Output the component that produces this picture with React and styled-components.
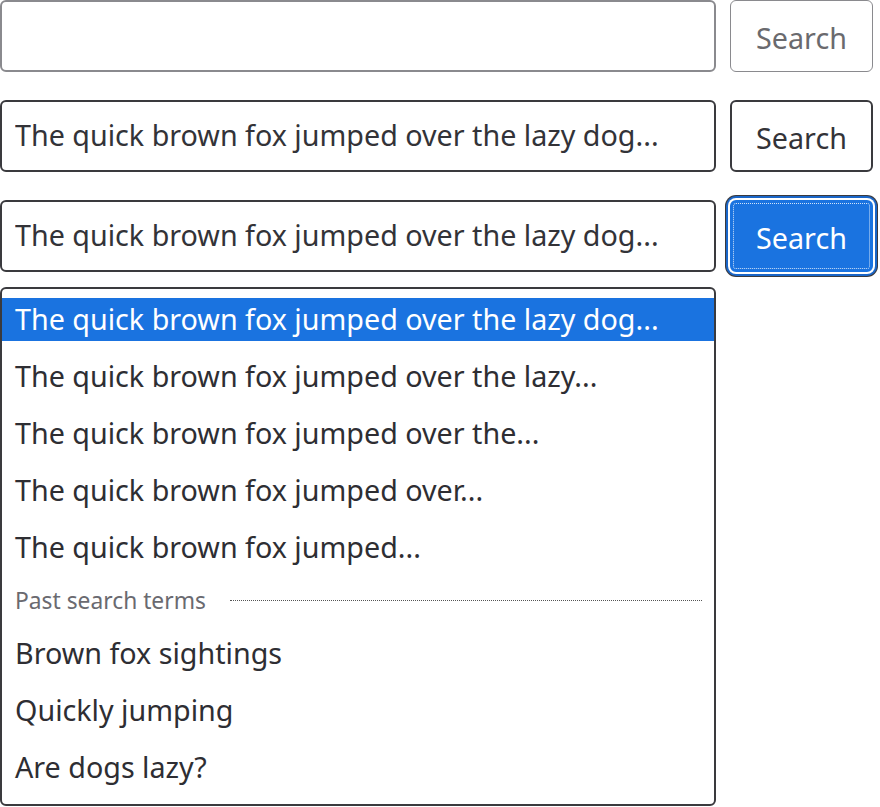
import React from "react";
import styled, { createGlobalStyle } from "styled-components";

const Global = createGlobalStyle`
  html, body { margin: 0; padding: 0; background: #fff; }
  body { font-family: "Noto Sans", "Open Sans", sans-serif; }
  * { box-sizing: border-box; }
`;

const Page = styled.div`
  display: flex;
  flex-direction: column;
  gap: 28px;
  width: 880px;
`;

const Row = styled.div`
  display: flex;
  gap: 14px;
  align-items: stretch;
`;

const Field = styled.input`
  width: 716px;
  height: 72px;
  padding: 0 13px 4px;
  border: 2px solid ${(p) => (p.disabled ? "#8a8a8e" : "#3a3a3e")};
  border-radius: 6px;
  background: #fff;
  font-family: "Noto Sans", sans-serif;
  font-size: 28.7px;
  color: #333338;
  outline: none;
`;

const Button = styled.button`
  width: 143px;
  height: 72px;
  border-radius: 6px;
  font-family: "Noto Sans", sans-serif;
  font-size: 28.7px;
  padding: 3px 0 0;
  cursor: pointer;
  border: ${(p) =>
    p.$primary ? "2px solid #1a73e0" : p.disabled ? "1.5px solid #8a8a8e" : "2px solid #3a3a3e"};
  background: ${(p) => (p.$primary ? "#1a73e0" : "#fff")};
  color: ${(p) => (p.$primary ? "#fff" : p.disabled ? "#6a6a6e" : "#333338")};
  box-shadow: ${(p) =>
    p.$primary ? "0 0 0 2px #fff, 0 0 0 4px #1a66c8, 0 0 0 5px #3a3a3e" : "none"};
  outline: ${(p) => (p.$primary ? "1px dotted rgba(255,255,255,0.8)" : "none")};
  outline-offset: -4px;
`;

const Listbox = styled.div`
  width: 716px;
  margin-top: -13px;
  border: 2px solid #3a3a3e;
  border-radius: 6px;
  padding: 9px 0 15px;
  display: flex;
  flex-direction: column;
`;

const Option = styled.div`
  height: 43px;
  margin-bottom: 14px;
  display: flex;
  align-items: center;
  padding: 0 13px 2px;
  font-size: 28.7px;
  color: ${(p) => (p.$active ? "#fff" : "#2e2e33")};
  background: ${(p) => (p.$active ? "#1a73e0" : "transparent")};
  white-space: nowrap;
  &:last-child { margin-bottom: 0; }
`;

const Group = styled.div`
  display: flex;
  align-items: center;
  gap: 24px;
  padding: 0 12px 0 13px;
  height: 24px;
  margin: 5px 0 20px;
  font-size: 22.8px;
  color: #6a6a70;
  white-space: nowrap;
`;

const Rule = styled.div`
  flex: 1;
  border-top: 1px dotted #555;
`;

const suggestions = [
  "The quick brown fox jumped over the lazy dog...",
  "The quick brown fox jumped over the lazy...",
  "The quick brown fox jumped over the...",
  "The quick brown fox jumped over...",
  "The quick brown fox jumped...",
];

const past = ["Brown fox sightings", "Quickly jumping", "Are dogs lazy?"];

export default function App() {
  return (
    <>
      <Global />
      <Page>
        <Row>
          <Field disabled value="" readOnly />
          <Button disabled>Search</Button>
        </Row>
        <Row>
          <Field value="The quick brown fox jumped over the lazy dog..." readOnly />
          <Button>Search</Button>
        </Row>
        <Row>
          <Field value="The quick brown fox jumped over the lazy dog..." readOnly />
          <Button $primary>Search</Button>
        </Row>
        <Listbox>
          {suggestions.map((s, i) => (
            <Option key={s} $active={i === 0}>
              {s}
            </Option>
          ))}
          <Group>
            Past search terms
            <Rule />
          </Group>
          {past.map((s) => (
            <Option key={s}>{s}</Option>
          ))}
        </Listbox>
      </Page>
    </>
  );
}
